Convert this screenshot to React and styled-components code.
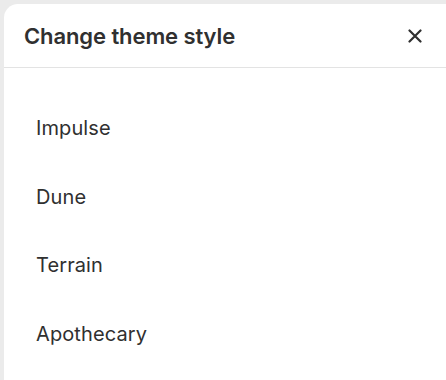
import React from 'react';
import styled, { createGlobalStyle } from "styled-components";

const themes = ['Impulse', 'Dune', 'Terrain', 'Apothecary'];

const App = () => {
  return (
    <>
      <GlobalStyle />
      <Page>
        <Panel>
          <Header>
            <Title>Change theme style</Title>
            <CloseButton aria-label="Close">
              <svg width="14" height="14" viewBox="0 0 14 14" fill="none">
                <path d="M1.5 1.5L12.5 12.5M12.5 1.5L1.5 12.5" stroke="#303030" strokeWidth="2.2" strokeLinecap="round" />
              </svg>
            </CloseButton>
          </Header>
          <List>
            {themes.map((name) => (
              <Item key={name}>{name}</Item>
            ))}
          </List>
        </Panel>
      </Page>
    </>
  );
};

const GlobalStyle = createGlobalStyle`
  body {
    margin: 0;
    background: #ebebeb;
    font-family: Inter, "Noto Sans", sans-serif;
  }
`;
const Page = styled.div`
  padding: 4px 0 0 4px;
  height: 376px;
  overflow: hidden;
`;
const Panel = styled.div`
  background: #ffffff;
  border-top-left-radius: 14px;
  height: 400px;
`;
const Header = styled.div`
  display: flex;
  align-items: center;
  justify-content: space-between;
  height: 63px;
  padding: 0 19px 0 20px;
  border-bottom: 1px solid #e3e3e3;
`;
const Title = styled.h2`
  margin: 0;
  font-size: 22px;
  font-weight: 600;
  color: #303030;
  letter-spacing: -0.1px;
`;
const CloseButton = styled.button`
  display: flex;
  align-items: center;
  justify-content: center;
  width: 24px;
  height: 24px;
  padding: 0;
  border: none;
  background: none;
  cursor: pointer;
`;
const List = styled.div`
  display: flex;
  flex-direction: column;
  padding: 26px 0 0 32px;
`;
const Item = styled.div`
  display: flex;
  align-items: center;
  height: 68.5px;
  font-size: 20px;
  color: #303030;
  letter-spacing: 0.1px;
`;

export default App;
